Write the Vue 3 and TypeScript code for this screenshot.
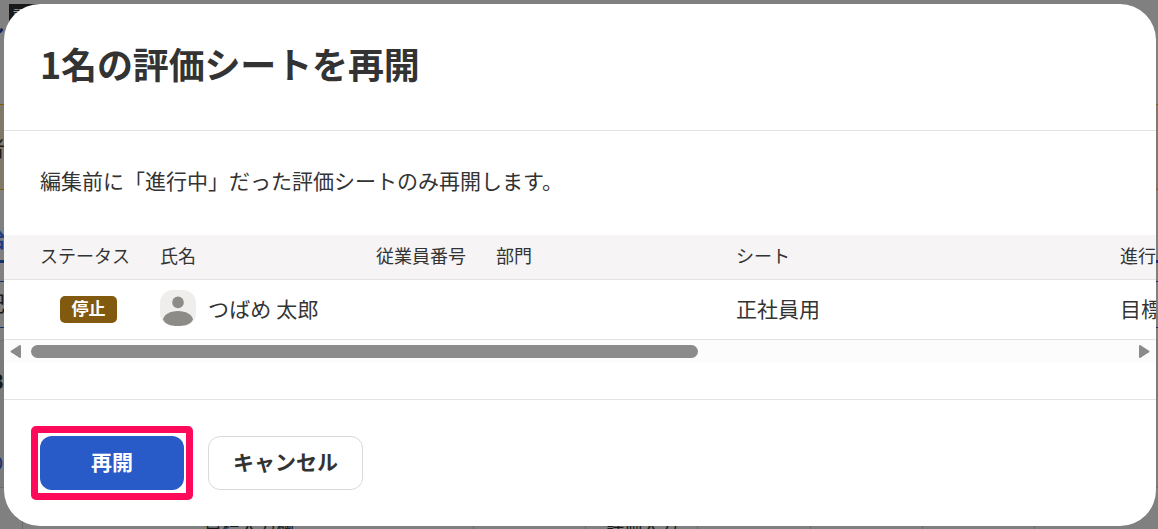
<script lang="ts" setup>
import { ref } from "vue";

interface Column {
  key: string;
  label: string;
  width: number;
}

interface Row {
  status: string;
  name: string;
  employeeNo: string;
  department: string;
  sheet: string;
  progress: string;
}

const columns: Column[] = [
  { key: "status", label: "ステータス", width: 120 },
  { key: "name", label: "氏名", width: 216 },
  { key: "employeeNo", label: "従業員番号", width: 120 },
  { key: "department", label: "部門", width: 240 },
  { key: "sheet", label: "シート", width: 384 },
  { key: "progress", label: "進行", width: 240 },
];

const rows = ref<Row[]>([
  {
    status: "停止",
    name: "つばめ 太郎",
    employeeNo: "",
    department: "",
    sheet: "正社員用",
    progress: "目標",
  },
]);

const cells = ["", "目標入力欄", "", "評価入力", "", "", "", ""];
const open = ref(true);

const close = () => {
  open.value = false;
};
</script>

<template>
  <div class="screen">
    <div class="page">
      <div class="page-top">
        <span class="page-link">し</span>
        <span class="page-tag">評</span>
      </div>
      <div class="page-notice">者</div>
      <div class="page-tabs">給</div>
      <div class="page-filter">記</div>
      <div class="page-list">
        <div class="page-count">3</div>
        <div class="page-more">の</div>
        <div class="page-row">
          <span v-for="(cell, i) in cells" :key="i" class="page-cell">{{
            cell
          }}</span>
        </div>
      </div>
    </div>

    <div v-if="open" class="overlay">
      <div class="dialog" role="dialog">
        <header class="dialog-header">
          <h1 class="dialog-title">1名の評価シートを再開</h1>
        </header>
        <div class="dialog-body">
          <p class="description">
            編集前に「進行中」だった評価シートのみ再開します。
          </p>
          <div class="table">
            <div class="tr head">
              <div
                v-for="col in columns"
                :key="col.key"
                class="td"
                :style="{ width: col.width + 'px' }"
              >
                {{ col.label }}
              </div>
            </div>
            <div v-for="row in rows" :key="row.name" class="tr">
              <div
                v-for="col in columns"
                :key="col.key"
                class="td"
                :style="{ width: col.width + 'px' }"
              >
                <span v-if="col.key === 'status'" class="badge">{{
                  row.status
                }}</span>
                <template v-else-if="col.key === 'name'">
                  <svg class="avatar" viewBox="0 0 36 36">
                    <rect width="36" height="36" rx="13" fill="#efeeec" />
                    <circle cx="18" cy="12.4" r="5.8" fill="#8c8b88" />
                    <path
                      d="M3 29.500C4 24.500 10 21 18 21s14 3.500 15 8.500C31 34 25.500 36 18 36S5 34 3 29.500Z"
                      fill="#8c8b88"
                    />
                  </svg>
                  <span class="name">{{ row.name }}</span>
                </template>
                <template v-else>{{ row[col.key as keyof Row] }}</template>
              </div>
            </div>
          </div>
          <div class="scrollbar">
            <svg class="arrow" viewBox="0 0 12 15">
              <path
                d="M11 2 2.500 7.500 11 13Z"
                fill="#8b8b8b"
                stroke="#8b8b8b"
                stroke-width="2"
                stroke-linejoin="round"
              />
            </svg>
            <div class="track"><div class="thumb"></div></div>
            <svg class="arrow" viewBox="0 0 12 15">
              <path
                d="M1 2 9.500 7.500 1 13Z"
                fill="#8b8b8b"
                stroke="#8b8b8b"
                stroke-width="2"
                stroke-linejoin="round"
              />
            </svg>
          </div>
        </div>
        <footer class="dialog-footer">
          <div class="focus-frame">
            <button class="btn primary" type="button" @click="close">
              再開
            </button>
          </div>
          <button class="btn" type="button" @click="close">キャンセル</button>
        </footer>
      </div>
    </div>
  </div>
</template>

<style>
body {
  margin: 0;
  overflow: hidden;
}
</style>

<style scoped>
.screen {
  position: relative;
  width: 1158px;
  height: 529px;
  overflow: hidden;
  background: #808080;
  color: #333;
  font-family: "Noto Sans CJK JP", sans-serif;
  font-size: 21px;
}

.screen * {
  box-sizing: border-box;
}

/* dimmed page behind the dialog */
.page {
  display: flex;
  flex-direction: column;
  height: 529px;
  color: #191918;
  line-height: 24px;
}

.page > * {
  flex-shrink: 0;
}

.page-top {
  display: flex;
  height: 104px;
  padding-top: 4px;
}

.page-link {
  width: 9px;
  padding-top: 8px;
  overflow: hidden;
  color: #14215a;
  font-weight: 700;
  text-indent: -16px;
}

.page-tag {
  width: 40px;
  height: 24px;
  background: #191918;
  color: #a0a5ad;
  font-size: 14px;
  line-height: 20px;
  padding-left: 4px;
}

.page-notice {
  height: 86px;
  border: solid #806000;
  border-width: 1px 0;
  background: #807969;
  padding-top: 30px;
  text-indent: -16px;
}

.page-tabs {
  height: 73px;
  margin-bottom: 18px;
  padding-top: 36px;
  border-bottom: 3px solid #143070;
  color: #1d3c80;
  font-weight: 700;
  text-indent: -16px;
}

.page-filter {
  height: 47px;
  border: solid #143070;
  border-width: 1px 0;
  padding-top: 8px;
  text-indent: -16px;
}

.page-list {
  height: 189px;
  margin-top: 12px;
  border-top: 1px solid #737373;
  background: #7b7b7b;
}

.page-count {
  height: 80px;
  padding-top: 28px;
  font-size: 20px;
  font-weight: 700;
  text-indent: -8px;
}

.page-more {
  width: 5px;
  height: 50px;
  padding-top: 31px;
  overflow: hidden;
  color: #143070;
  line-height: 18px;
  text-decoration: underline;
  text-indent: -17px;
}

.page-row {
  display: flex;
  height: 60px;
  margin-top: 16px;
  padding-left: 22px;
  border-top: 1px solid #6c6c6c;
  background: #808080;
}

.page-cell {
  flex: none;
  width: 112.4px;
  padding: 25px 0 0 20px;
  border-left: 1px solid #6c6c6c;
  font-size: 18px;
  white-space: nowrap;
}

.page-cell:nth-child(1) {
  width: 113px;
}

.page-cell:nth-child(2) {
  width: 337.5px;
  padding-left: 69px;
  border-left: 0;
}

.overlay {
  position: absolute;
  inset: 0;
  padding: 4px 2px 3px 4px;
}

.dialog {
  display: flex;
  flex-direction: column;
  height: 522px;
  border-radius: 36px;
  background: #fff;
  overflow: hidden;
}

.dialog-header {
  height: 127px;
  padding: 32px 36px 0;
  border-bottom: 1px solid #e3e3e3;
}

.dialog-title {
  margin: 0;
  font-size: 36px;
  line-height: 54px;
  letter-spacing: -0.15px;
}

.dialog-body {
  height: 269px;
  border-bottom: 1px solid #e3e3e3;
}

.description {
  margin: 0;
  padding: 33px 36px 0;
  height: 104px;
  line-height: 32px;
}

.table {
  overflow: hidden;
}

.tr {
  display: flex;
  width: 1400px;
  height: 60px;
  padding: 0 0 4px 36px;
  border-bottom: 1px solid #e3e3e3;
}

.tr.head {
  height: 45px;
  background: #f6f4f5;
  font-size: 18px;
}

.td {
  display: flex;
  flex: none;
  align-items: center;
  white-space: nowrap;
}

.badge {
  width: 57px;
  height: 27px;
  margin: 4px 0 0 20px;
  border-radius: 5px;
  background: #825a0f;
  color: #fff;
  font-size: 17px;
  font-weight: 700;
  line-height: 24px;
  text-align: center;
}

.avatar {
  width: 36px;
  height: 36px;
  margin-right: 12px;
}

.name {
  letter-spacing: 0.15px;
}

.scrollbar {
  display: flex;
  align-items: center;
  height: 23px;
  padding: 0 5px;
  background: #fcfcfc;
}

.arrow {
  flex: none;
  width: 12px;
  height: 15px;
}

.track {
  flex: 1;
  padding: 0 10px;
}

.thumb {
  width: 667px;
  height: 13px;
  border-radius: 7px;
  background: #8b8b8b;
}

.dialog-footer {
  display: flex;
  align-items: center;
  gap: 15px;
  padding: 26px 27px;
}

.focus-frame {
  width: 162px;
  height: 74px;
  padding: 3px 2px;
  border: 7px solid #ff0a5b;
  border-radius: 5px;
}

.btn {
  width: 155px;
  height: 54px;
  padding: 0 0 4px;
  border: 1px solid #d9d9d9;
  border-radius: 12px;
  background: #fff;
  color: #333;
  font-family: inherit;
  font-size: 21px;
  font-weight: 700;
  line-height: 48px;
}

.btn.primary {
  width: 144px;
  border: 0;
  background: #285ac8;
  color: #fff;
}
</style>
